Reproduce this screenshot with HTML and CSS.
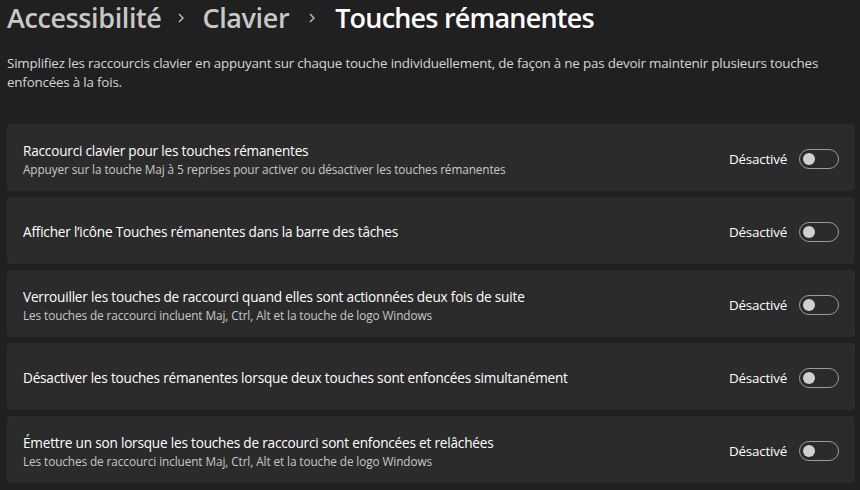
FILE: index.html
```html
<!DOCTYPE html>
<html lang="fr">

<head>
    <meta charset="UTF-8">
    <meta name="viewport" content="width=device-width, initial-scale=1.0">
    <title>Touches rémanentes</title>
    <link rel="stylesheet" href="styles.css">
</head>

<body>
    <div class="page">

        <h1 class="breadcrumb">
            <span class="crumb">Accessibilité</span>
            <svg class="chevron" viewBox="0 0 8 10" width="8" height="10"><path d="M2 1 L6 5 L2 9" /></svg>
            <span class="crumb">Clavier</span>
            <svg class="chevron last" viewBox="0 0 8 10" width="8" height="10"><path d="M2 1 L6 5 L2 9" /></svg>
            <span class="crumb current">Touches rémanentes</span>
        </h1>

        <p class="intro">Simplifiez les raccourcis clavier en appuyant sur chaque touche individuellement, de façon à ne pas devoir maintenir plusieurs touches enfoncées à la fois.</p>

        <div class="settings">

            <div class="setting">
                <div class="setting-text">
                    <div class="setting-title">Raccourci clavier pour les touches rémanentes</div>
                    <div class="setting-desc">Appuyer sur la touche Maj à 5 reprises pour activer ou désactiver les touches rémanentes</div>
                </div>
                <span class="state">Désactivé</span>
                <span class="toggle"></span>
            </div>

            <div class="setting">
                <div class="setting-text">
                    <div class="setting-title">Afficher l’icône Touches rémanentes dans la barre des tâches</div>
                </div>
                <span class="state">Désactivé</span>
                <span class="toggle"></span>
            </div>

            <div class="setting">
                <div class="setting-text">
                    <div class="setting-title">Verrouiller les touches de raccourci quand elles sont actionnées deux fois de suite</div>
                    <div class="setting-desc">Les touches de raccourci incluent Maj, Ctrl, Alt et la touche de logo Windows</div>
                </div>
                <span class="state">Désactivé</span>
                <span class="toggle"></span>
            </div>

            <div class="setting">
                <div class="setting-text">
                    <div class="setting-title">Désactiver les touches rémanentes lorsque deux touches sont enfoncées simultanément</div>
                </div>
                <span class="state">Désactivé</span>
                <span class="toggle"></span>
            </div>

            <div class="setting">
                <div class="setting-text">
                    <div class="setting-title">Émettre un son lorsque les touches de raccourci sont enfoncées et relâchées</div>
                    <div class="setting-desc">Les touches de raccourci incluent Maj, Ctrl, Alt et la touche de logo Windows</div>
                </div>
                <span class="state">Désactivé</span>
                <span class="toggle"></span>
            </div>

        </div>
    </div>
</body>

</html>
```

FILE: styles.css
```css
html {
    box-sizing: border-box;
}

*,
*::before,
*::after {
    box-sizing: inherit;
}

body {
    margin: 0;
    background-color: #202020;
    color: #ffffff;
    font-family: "Open Sans", "Noto Sans", sans-serif;
    overflow: hidden;
}

.page {
    padding: 0 5px 0 7px;
}

/* fil d'ariane en haut */
.breadcrumb {
    display: flex;
    align-items: center;
    margin: 0;
    height: 34px;
    font-size: 27px;
    font-weight: 600;
    letter-spacing: -0.4px;
    color: #c8c8c8;
    white-space: nowrap;
}

.crumb.current {
    color: #ffffff;
    letter-spacing: -0.8px;
}

.chevron {
    margin: 2px 17px 0 16px;
    fill: none;
    stroke: #c0c0c0;
    stroke-width: 1.4;
}

.chevron.last {
    margin-left: 19px;
    margin-right: 19px;
}

.intro {
    margin: 20px 0 0 0;
    font-size: 13.4px;
    line-height: 19px;
    color: #d6d6d6;
    letter-spacing: -0.2px;
}

.settings {
    display: flex;
    flex-direction: column;
    gap: 6px;
    margin-top: 32px;
}

.setting {
    display: flex;
    align-items: center;
    height: 67px;
    padding: 2px 16px 0 16px;
    background-color: #2b2b2b;
    border-radius: 4px;
}

.setting-text {
    flex: 1;
}

.setting-title {
    font-size: 13.6px;
    line-height: 20px;
    letter-spacing: -0.2px;
}

.setting-desc {
    font-size: 11.8px;
    line-height: 16px;
    color: #c8c8c8;
    letter-spacing: -0.1px;
}

.state {
    font-size: 13.4px;
    margin-right: 12px;
    letter-spacing: -0.2px;
}

/* interrupteur désactivé */
.toggle {
    position: relative;
    width: 40px;
    height: 20px;
    border: 1px solid #9d9d9d;
    border-radius: 10px;
}

.toggle::after {
    content: "";
    position: absolute;
    top: 3px;
    left: 3px;
    width: 12px;
    height: 12px;
    border-radius: 50%;
    background-color: #d0d0d0;
}
```
